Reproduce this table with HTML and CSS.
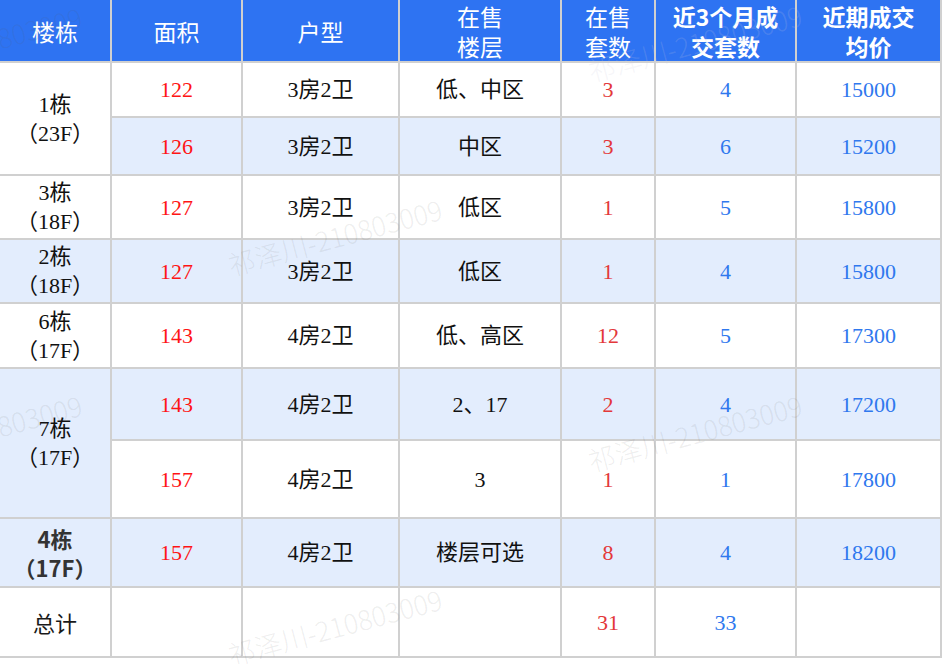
FILE: index.html
```html
<!DOCTYPE html>
<html lang="zh-CN">
<head>
<meta charset="utf-8">
<title>在售房源统计</title>
<link rel="stylesheet" href="styles.css">
</head>
<body>
<div class="page">
  <div class="grid">
    <div class="c h">楼栋</div>
    <div class="c h">面积</div>
    <div class="c h">户型</div>
    <div class="c h">在售<br>楼层</div>
    <div class="c h">在售<br>套数</div>
    <div class="c h b">近3个月成<br>交套数</div>
    <div class="c h b">近期成交<br>均价</div>

    <div class="c bld span2">1栋<br>（23F）</div>
    <div class="c red">122</div>
    <div class="c">3房2卫</div>
    <div class="c">低、中区</div>
    <div class="c red2">3</div>
    <div class="c blue">4</div>
    <div class="c blue">15000</div>

    <div class="c alt red">126</div>
    <div class="c alt">3房2卫</div>
    <div class="c alt">中区</div>
    <div class="c alt red2">3</div>
    <div class="c alt blue">6</div>
    <div class="c alt blue">15200</div>

    <div class="c bld">3栋<br>（18F）</div>
    <div class="c red">127</div>
    <div class="c">3房2卫</div>
    <div class="c">低区</div>
    <div class="c red2">1</div>
    <div class="c blue">5</div>
    <div class="c blue">15800</div>

    <div class="c alt bld">2栋<br>（18F）</div>
    <div class="c alt red">127</div>
    <div class="c alt">3房2卫</div>
    <div class="c alt">低区</div>
    <div class="c alt red2">1</div>
    <div class="c alt blue">4</div>
    <div class="c alt blue">15800</div>

    <div class="c bld">6栋<br>（17F）</div>
    <div class="c red">143</div>
    <div class="c">4房2卫</div>
    <div class="c">低、高区</div>
    <div class="c red2">12</div>
    <div class="c blue">5</div>
    <div class="c blue">17300</div>

    <div class="c alt bld span2">7栋<br>（17F）</div>
    <div class="c alt red">143</div>
    <div class="c alt">4房2卫</div>
    <div class="c alt">2、17</div>
    <div class="c alt red2">2</div>
    <div class="c alt blue">4</div>
    <div class="c alt blue">17200</div>

    <div class="c red">157</div>
    <div class="c">4房2卫</div>
    <div class="c">3</div>
    <div class="c red2">1</div>
    <div class="c blue">1</div>
    <div class="c blue">17800</div>

    <div class="c alt bld sans-b">4栋<br>（17F）</div>
    <div class="c alt red">157</div>
    <div class="c alt">4房2卫</div>
    <div class="c alt">楼层可选</div>
    <div class="c alt red2">8</div>
    <div class="c alt blue">4</div>
    <div class="c alt blue">18200</div>

    <div class="c sans">总计</div>
    <div class="c"></div>
    <div class="c"></div>
    <div class="c"></div>
    <div class="c red2">31</div>
    <div class="c blue">33</div>
    <div class="c"></div>
  </div>

  <div class="wm">
    <span class="w w1">祁泽川-210803009</span>
    <span class="w w2">祁泽川-210803009</span>
    <span class="w w3">祁泽川-210803009</span>
    <span class="w w4">祁泽川-210803009</span>
    <span class="w w5">祁泽川-210803009</span>
    <span class="w w6">祁泽川-210803009</span>
  </div>
</div>
</body>
</html>
```

FILE: styles.css
```css
html, body {
  margin: 0;
  padding: 0;
  background: #ffffff;
}

.page {
  position: relative;
  width: 946px;
  height: 664px;
  overflow: hidden;
}

.grid {
  display: grid;
  grid-template-columns: 112px 131px 157px 162px 94px 141px 145px;
  grid-template-rows: 63px 55px 58px 64px 64px 65px 72px 78px 69px 70px;
  font-family: "Liberation Serif", "Noto Sans CJK SC", serif;
  font-size: 22px;
  line-height: 29px;
  color: #111;
}

.c {
  box-sizing: border-box;
  border-right: 2px solid #d0d0d0;
  border-bottom: 2px solid #d0d0d0;
  display: flex;
  align-items: center;
  justify-content: center;
  text-align: center;
  background: #ffffff;
}

.h {
  background: #2e73f2;
  color: #ffffff;
  font-family: "Noto Sans CJK SC", sans-serif;
  font-size: 23px;
  line-height: 30px;
  font-weight: 400;
}

.h.b {
  font-weight: 700;
}

.alt {
  background: #e3edfd;
}

.span2 {
  grid-row: span 2;
}

.red {
  color: #ff1414;
}

.red2 {
  color: #e3383a;
}

.blue {
  color: #2f78ee;
}

.sans-b {
  font-family: "Noto Sans CJK SC", sans-serif;
  font-weight: 700;
  color: #333333;
}

.sans {
  font-family: "Noto Sans CJK SC", sans-serif;
  color: #1a1a1a;
}

.wm {
  position: absolute;
  left: 0;
  top: 0;
  width: 946px;
  height: 664px;
  pointer-events: none;
}

.w {
  position: absolute;
  width: 260px;
  margin-left: -130px;
  margin-top: -18px;
  line-height: 36px;
  text-align: center;
  white-space: nowrap;
  font-family: "Noto Sans CJK SC", sans-serif;
  font-weight: 300;
  font-size: 27px;
  color: rgba(90, 90, 90, 0.1);
  transform: rotate(-15deg);
}

.w1 { left: -25px; top: 45px; }
.w2 { left: -25px; top: 433px; }
.w3 { left: 335px; top: 237px; }
.w4 { left: 335px; top: 627px; }
.w5 { left: 695px; top: 43px; color: rgba(200, 200, 220, 0.18); }
.w6 { left: 695px; top: 433px; }
```
